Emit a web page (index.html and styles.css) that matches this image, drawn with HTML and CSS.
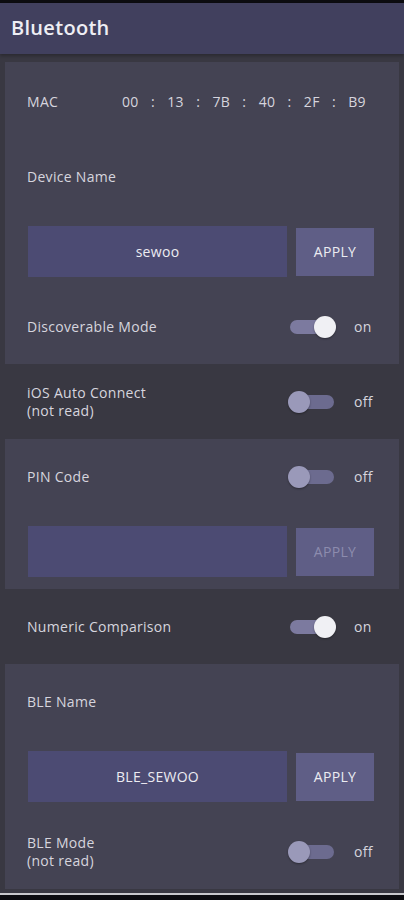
FILE: index.html
```html
<!DOCTYPE html>
<html>
<head>
<meta charset="utf-8">
<link rel="stylesheet" href="styles.css">
</head>
<body>
<div class="topstrip"></div>
<header class="appbar"><h1 class="title">Bluetooth</h1></header>
<main class="content">
  <section class="card card-first">
    <div class="row">
      <span class="label mac-label">MAC</span>
      <div class="mac">
        <span>00</span><span>:</span><span>13</span><span>:</span><span>7B</span><span>:</span><span>40</span><span>:</span><span>2F</span><span>:</span><span>B9</span>
      </div>
    </div>
    <div class="row"><span class="label">Device Name</span></div>
    <div class="row">
      <div class="field">sewoo</div>
      <button class="apply">APPLY</button>
    </div>
    <div class="row">
      <span class="label grow">Discoverable Mode</span>
      <span class="switch on"><span class="track"></span><span class="thumb"></span></span>
      <span class="state">on</span>
    </div>
  </section>

  <div class="row plain">
    <span class="label grow">iOS Auto Connect<br>(not read)</span>
    <span class="switch"><span class="track"></span><span class="thumb"></span></span>
    <span class="state">off</span>
  </div>

  <section class="card">
    <div class="row">
      <span class="label grow">PIN Code</span>
      <span class="switch"><span class="track"></span><span class="thumb"></span></span>
      <span class="state">off</span>
    </div>
    <div class="row">
      <div class="field"></div>
      <button class="apply disabled">APPLY</button>
    </div>
  </section>

  <div class="row plain">
    <span class="label grow">Numeric Comparison</span>
    <span class="switch on"><span class="track"></span><span class="thumb"></span></span>
    <span class="state">on</span>
  </div>

  <section class="card">
    <div class="row"><span class="label">BLE Name</span></div>
    <div class="row">
      <div class="field">BLE_SEWOO</div>
      <button class="apply">APPLY</button>
    </div>
    <div class="row">
      <span class="label grow">BLE Mode<br>(not read)</span>
      <span class="switch"><span class="track"></span><span class="thumb"></span></span>
      <span class="state">off</span>
    </div>
  </section>
</main>
<div class="bottombar"></div>
</body>
</html>
```
FILE: styles.css
```css
* { box-sizing: border-box; }
html, body { margin: 0; padding: 0; }
body {
  width: 404px;
  height: 900px;
  overflow: hidden;
  background: #393842;
  font-family: "Open Sans", "Noto Sans", sans-serif;
  color: #d6d5de;
  font-size: 14px;
  letter-spacing: 0.3px;
}
.topstrip { height: 3px; background: #0c0c10; }
.appbar {
  height: 51px;
  background: #41405e;
  display: flex;
  align-items: center;
  padding-left: 11px;
  box-shadow: 0 2px 3px rgba(0,0,0,0.25);
}
.title {
  margin: 0;
  font-size: 20px;
  font-weight: 600;
  color: #eeeef4;
  padding-bottom: 2px;
}
.content { padding-top: 8px; }
.card {
  margin: 0 5px;
  background: #444353;
}
.card-first { padding-top: 2px; }
.row {
  height: 75px;
  display: flex;
  align-items: center;
  padding: 0 25px 0 22px;
}
.row.plain { padding-left: 27px; padding-right: 30px; }
.label { line-height: 18px; }
.grow { flex: 1; }
.mac-label { width: 95px; }
.mac {
  width: 244px;
  display: flex;
  justify-content: space-between;
}
.field {
  width: 259px;
  height: 51px;
  margin-left: 1px;
  background: #4c4b73;
  display: flex;
  align-items: center;
  justify-content: center;
  color: #ececf2;
  font-size: 14px;
}
.apply {
  margin-left: 9px;
  width: 78px;
  height: 48px;
  border: none;
  background: #5f5e86;
  color: #ececf2;
  font-family: inherit;
  font-size: 14px;
  letter-spacing: 0.3px;
  padding: 0;
}
.apply.disabled { color: #8d8cae; }
.switch {
  position: relative;
  width: 48px;
  height: 22px;
  margin-right: 18px;
}
.track {
  position: absolute;
  left: 2px;
  top: 4px;
  width: 44px;
  height: 14px;
  border-radius: 7px;
  background: #6c6b8f;
}
.switch.on .track { background: #7c7a9f; }
.thumb {
  position: absolute;
  top: 0;
  left: 0;
  width: 22px;
  height: 22px;
  border-radius: 50%;
  background: #9a99b9;
  box-shadow: 0 1px 2px rgba(0,0,0,0.35);
}
.switch.on .thumb { left: 26px; background: #f0f0f4; }
.state { width: 20px; }
.bottombar {
  position: fixed;
  left: 0;
  right: 0;
  bottom: 0;
  height: 7px;
  border-top: 2px solid #c8c8cc;
  background: #0c0c10;
}
```
